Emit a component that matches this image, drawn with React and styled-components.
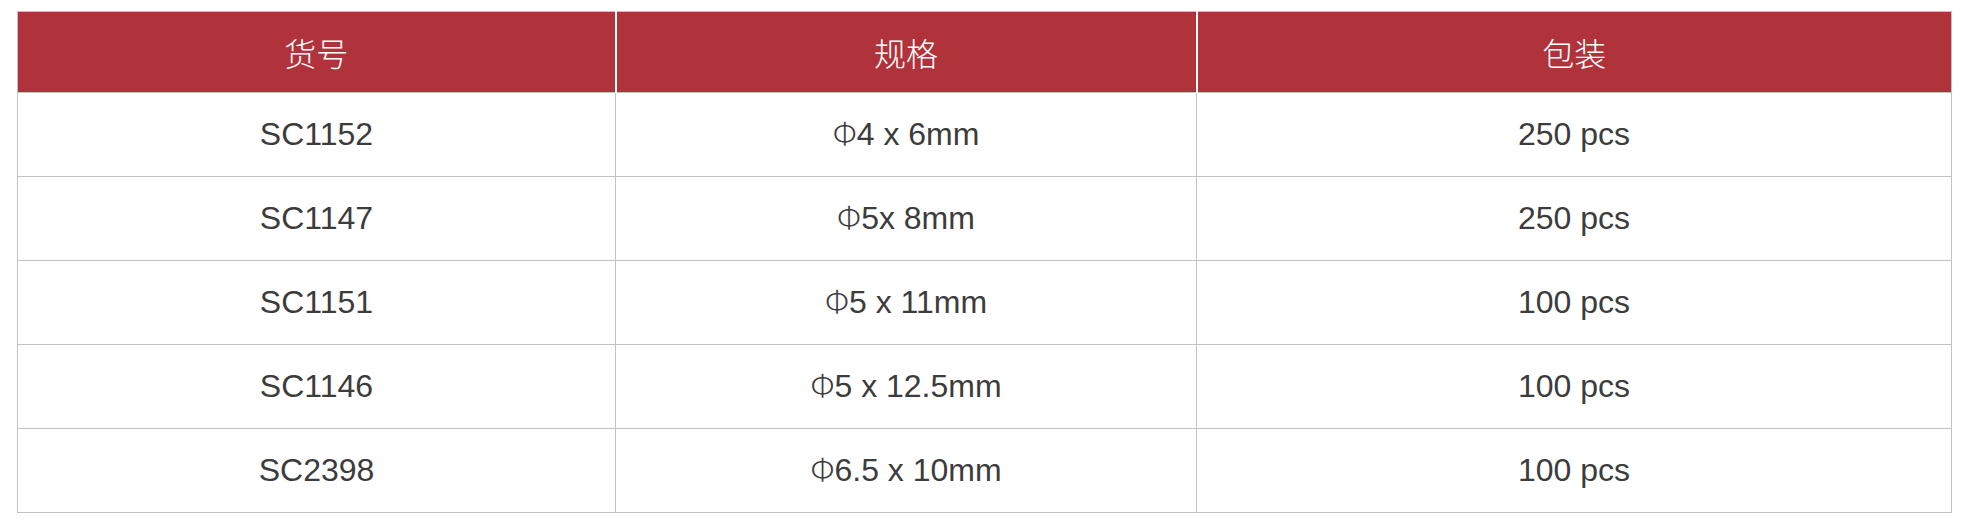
import React from "react";
import styled, { createGlobalStyle } from "styled-components";

const GlobalStyle = createGlobalStyle`
  body {
    margin: 0;
    background: #ffffff;
  }
`;

const Page = styled.div`
  padding: 11px 17px 0 17px;
`;

const SpecTable = styled.table`
  width: 1934px;
  border-collapse: collapse;
  table-layout: fixed;
  border: 1px solid #c2c2c2;
  font-family: "Liberation Sans", Arial, "Noto Sans CJK SC", sans-serif;
`;

const HeadCell = styled.th`
  height: 80px;
  padding: 0;
  background-color: #b0323a;
  color: #ffffff;
  font-family: "Noto Sans CJK SC", "Liberation Sans", sans-serif;
  font-weight: 200;
  font-size: 32px;
  text-align: center;
  border-top: 1px solid #c2c2c2;
  border-left: 2px solid #ffffff;
  border-right: 2px solid #ffffff;

  &:first-child {
    border-left: 1px solid #c2c2c2;
  }
  &:last-child {
    border-right: 1px solid #c2c2c2;
  }
`;

const Cell = styled.td`
  height: 83px;
  padding: 0;
  text-align: center;
  color: #3c3c3c;
  font-size: 32px;
  line-height: 37px;
  border: 1px solid #c2c2c2;
`;

// the diameter sign is a thin glyph in the original
const Phi = styled.span`
  font-family: "Noto Sans CJK SC", sans-serif;
  font-weight: 200;
  font-size: 31px;
  line-height: 1;
`;

const columns = [
  { title: "货号", width: 598 },
  { title: "规格", width: 581 },
  { title: "包装", width: 755 },
];

const rows = [
  { code: "SC1152", size: "4 x 6mm", pack: "250 pcs" },
  { code: "SC1147", size: "5x 8mm", pack: "250 pcs" },
  { code: "SC1151", size: "5 x 11mm", pack: "100 pcs" },
  { code: "SC1146", size: "5 x 12.5mm", pack: "100 pcs" },
  { code: "SC2398", size: "6.5 x 10mm", pack: "100 pcs" },
];

export default function App() {
  return (
    <>
      <GlobalStyle />
      <Page>
        <SpecTable>
          <colgroup>
            {columns.map((c) => (
              <col key={c.title} style={{ width: c.width }} />
            ))}
          </colgroup>
          <thead>
            <tr>
              {columns.map((c) => (
                <HeadCell key={c.title}>{c.title}</HeadCell>
              ))}
            </tr>
          </thead>
          <tbody>
            {rows.map((r) => (
              <tr key={r.code}>
                <Cell>{r.code}</Cell>
                <Cell>
                  <Phi>Φ</Phi>
                  {r.size}
                </Cell>
                <Cell>{r.pack}</Cell>
              </tr>
            ))}
          </tbody>
        </SpecTable>
      </Page>
    </>
  );
}
